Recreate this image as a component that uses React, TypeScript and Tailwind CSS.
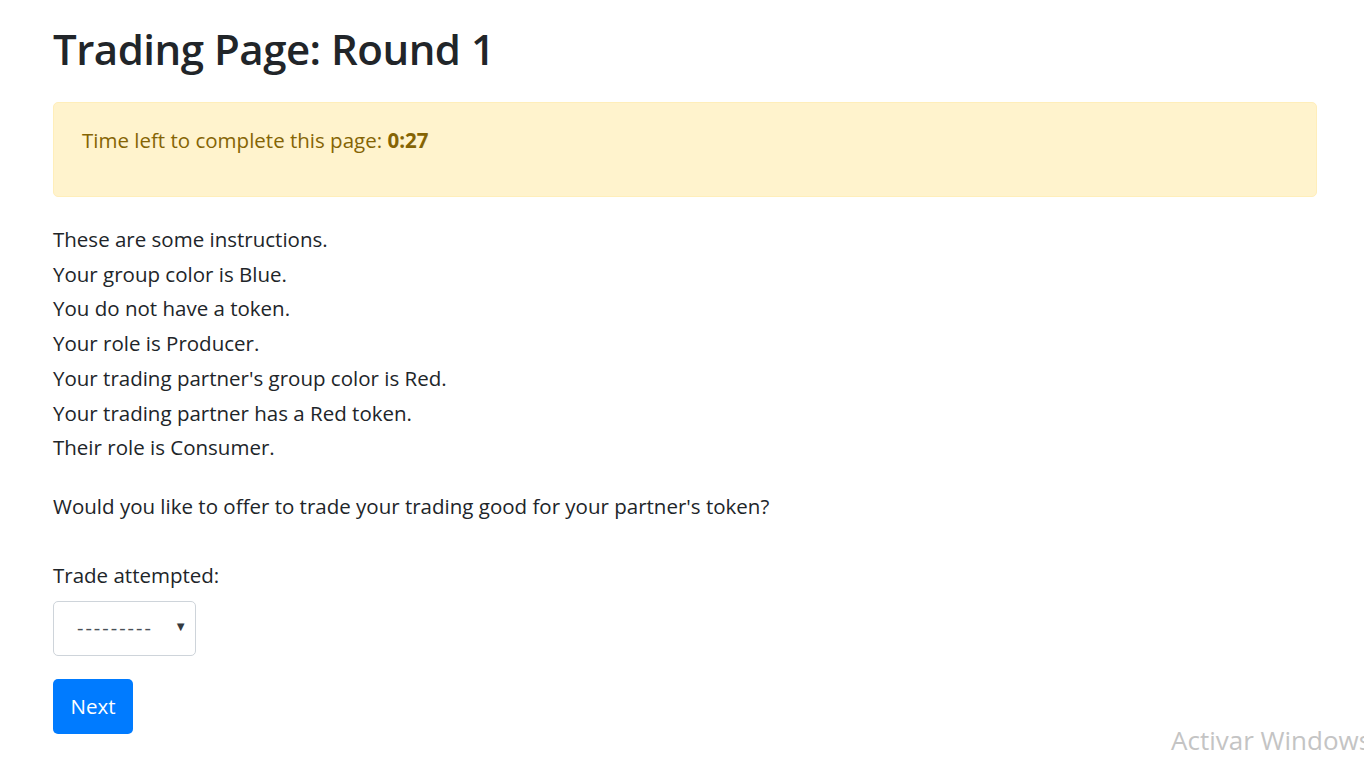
import React from 'react'

const lines = [
  'These are some instructions.',
  'Your group color is Blue.',
  'You do not have a token.',
  'Your role is Producer.',
  "Your trading partner's group color is Red.",
  'Your trading partner has a Red token.',
  'Their role is Consumer.',
]

export default function App() {
  return (
    <div
      className="relative h-[766px] w-[1364px] overflow-hidden bg-white text-[#212529]"
      style={{ fontFamily: '"Open Sans", "Noto Sans", sans-serif' }}
    >
      <div className="pl-[53px] pr-[47px] pt-[22px]">
        <h1 className="text-[42px] leading-[54px] font-semibold tracking-[-0.5px]">Trading Page: Round 1</h1>

        <div className="mt-[26px] h-[95px] rounded-[5px] border border-[#ffeeba] bg-[#fff3cd] pl-[28px] pt-[20px] text-[#856404]">
          <p className="text-[20.5px] leading-[34px]">
            Time left to complete this page: <b className="font-bold">0:27</b>
          </p>
        </div>

        <div className="mt-[25px] text-[20.5px] leading-[34.7px]">
          {lines.map((l) => (
            <div key={l}>{l}</div>
          ))}
        </div>

        <p className="mt-[24px] text-[20.5px] leading-[34px]">
          Would you like to offer to trade your trading good for your partner's token?
        </p>

        <div className="mt-[35px] text-[20.5px] leading-[34px]">Trade attempted:</div>

        <div className="mt-[9px] flex h-[55px] w-[143px] items-center justify-between rounded-[5px] border border-[#ced4da] pl-[23px] pr-[8px]">
          <span className="text-[20px] tracking-[2px] text-[#495057]">---------</span>
          <span className="mb-[4px] text-[13px] text-[#343a40]">▼</span>
        </div>

        <button className="mt-[23px] flex h-[55px] w-[80px] items-center justify-center rounded-[5px] bg-[#007bff] text-[20.5px] text-white">
          Next
        </button>
      </div>

      <div className="absolute left-[1171px] top-[722px] whitespace-nowrap text-[26px] leading-[36px] text-[#c4c4c4]">
        Activar Windows
      </div>
    </div>
  )
}
